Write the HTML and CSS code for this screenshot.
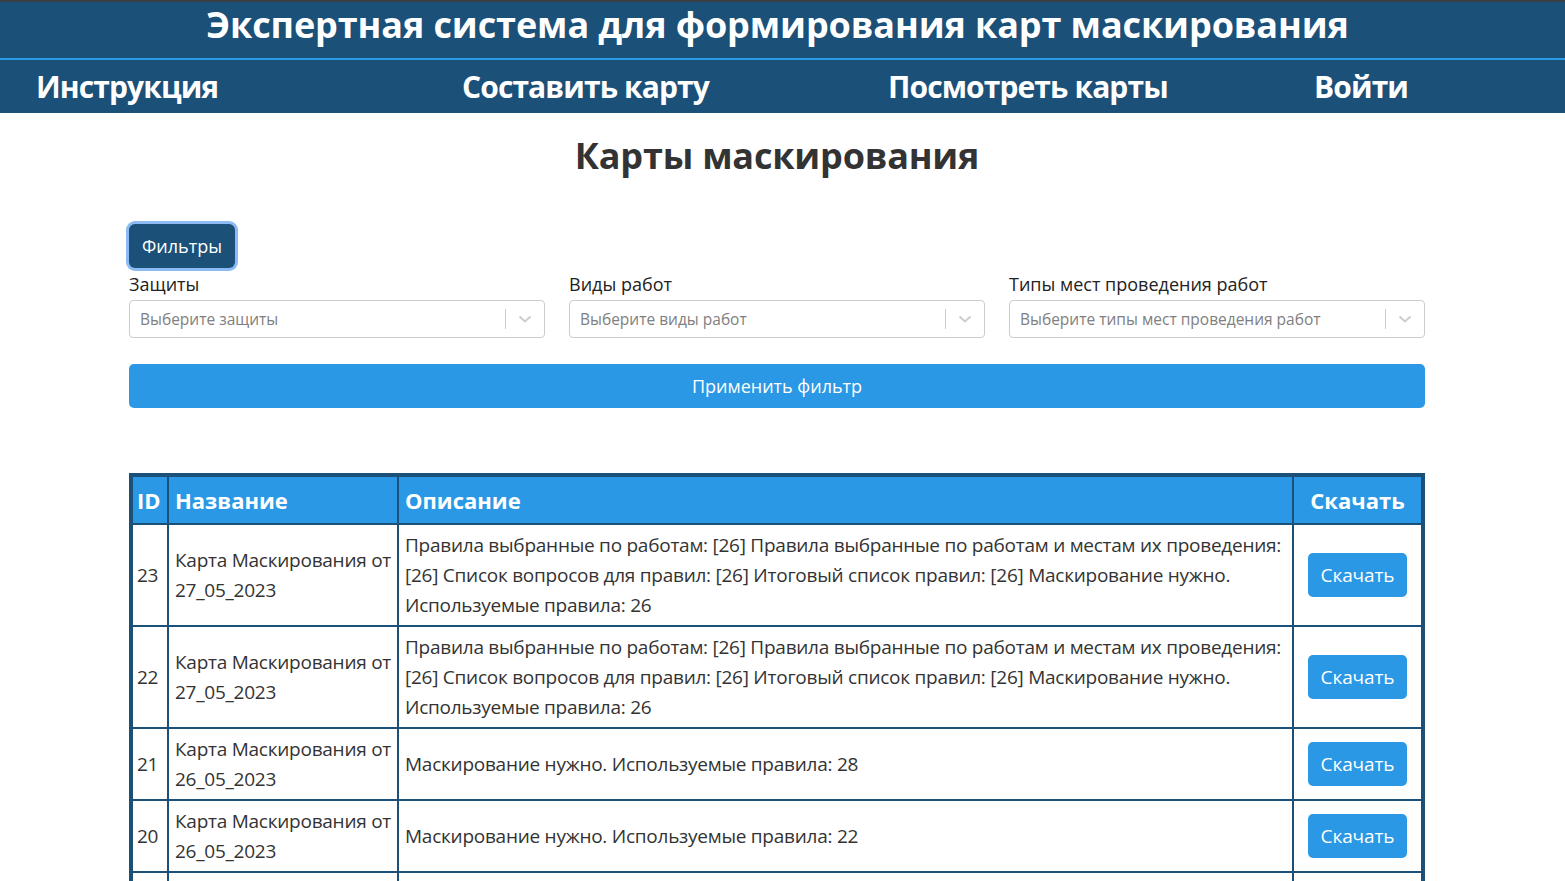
FILE: index.html
```html
<!DOCTYPE html>
<html lang="ru">
<head>
<meta charset="utf-8">
<title>Карты маскирования</title>
<link rel="stylesheet" href="styles.css">
</head>
<body>
<header class="site-header">
  <div class="title-bar">Экспертная система для формирования карт маскирования</div>
  <nav class="nav-bar">
    <a class="nav-link" href="#">Инструкция</a>
    <a class="nav-link" href="#">Составить карту</a>
    <a class="nav-link" href="#">Посмотреть карты</a>
    <a class="nav-link" href="#">Войти</a>
  </nav>
</header>
<main class="page">
  <h1 class="page-title">Карты маскирования</h1>
  <section class="filters">
    <button class="btn-filters" type="button">Фильтры</button>
    <div class="filter-grid">
      <div class="field">
        <label class="field-label">Защиты</label>
        <div class="select">
          <span class="select-placeholder">Выберите защиты</span>
          <span class="select-sep"></span>
          <svg class="select-chevron" viewBox="0 0 20 20" width="20" height="20"><path d="M4.5 7.5 L10 12.5 L15.5 7.5" fill="none" stroke="#ccc" stroke-width="2"/></svg>
        </div>
      </div>
      <div class="field">
        <label class="field-label">Виды работ</label>
        <div class="select">
          <span class="select-placeholder">Выберите виды работ</span>
          <span class="select-sep"></span>
          <svg class="select-chevron" viewBox="0 0 20 20" width="20" height="20"><path d="M4.5 7.5 L10 12.5 L15.5 7.5" fill="none" stroke="#ccc" stroke-width="2"/></svg>
        </div>
      </div>
      <div class="field">
        <label class="field-label">Типы мест проведения работ</label>
        <div class="select">
          <span class="select-placeholder">Выберите типы мест проведения работ</span>
          <span class="select-sep"></span>
          <svg class="select-chevron" viewBox="0 0 20 20" width="20" height="20"><path d="M4.5 7.5 L10 12.5 L15.5 7.5" fill="none" stroke="#ccc" stroke-width="2"/></svg>
        </div>
      </div>
    </div>
    <button class="btn-apply" type="button">Применить фильтр</button>
  </section>
  <table class="maps">
    <thead>
      <tr>
        <th class="col-id">ID</th>
        <th class="col-name">Название</th>
        <th class="col-desc">Описание</th>
        <th class="col-dl">Скачать</th>
      </tr>
    </thead>
    <tbody>
      <tr>
        <td class="col-id">23</td>
        <td class="col-name">Карта Маскирования от 27_05_2023</td>
        <td class="col-desc">Правила выбранные по работам: [26] Правила выбранные по работам и местам их проведения: [26] Список вопросов для правил: [26] Итоговый список правил: [26] Маскирование нужно. Используемые правила: 26</td>
        <td class="col-dl"><button class="btn-dl" type="button">Скачать</button></td>
      </tr>
      <tr>
        <td class="col-id">22</td>
        <td class="col-name">Карта Маскирования от 27_05_2023</td>
        <td class="col-desc">Правила выбранные по работам: [26] Правила выбранные по работам и местам их проведения: [26] Список вопросов для правил: [26] Итоговый список правил: [26] Маскирование нужно. Используемые правила: 26</td>
        <td class="col-dl"><button class="btn-dl" type="button">Скачать</button></td>
      </tr>
      <tr>
        <td class="col-id">21</td>
        <td class="col-name">Карта Маскирования от 26_05_2023</td>
        <td class="col-desc">Маскирование нужно. Используемые правила: 28</td>
        <td class="col-dl"><button class="btn-dl" type="button">Скачать</button></td>
      </tr>
      <tr>
        <td class="col-id">20</td>
        <td class="col-name">Карта Маскирования от 26_05_2023</td>
        <td class="col-desc">Маскирование нужно. Используемые правила: 22</td>
        <td class="col-dl"><button class="btn-dl" type="button">Скачать</button></td>
      </tr>
      <tr>
        <td class="col-id">19</td>
        <td class="col-name">Карта Маскирования от 26_05_2023</td>
        <td class="col-desc">Маскирование нужно. Используемые правила: 22</td>
        <td class="col-dl"><button class="btn-dl" type="button">Скачать</button></td>
      </tr>
    </tbody>
  </table>
</main>
</body>
</html>
```

FILE: styles.css
```css
* { box-sizing: border-box; }
html, body { margin: 0; padding: 0; }
body {
  font-family: "Open Sans", "Noto Sans", sans-serif;
  color: #333;
  background: #fff;
}
.site-header {
  background: #1b5079;
  border-top: 2px solid #3a3f44;
}
.title-bar {
  height: 56px;
  color: #fff;
  font-weight: 700;
  font-size: 36px;
  text-align: center;
  line-height: 46px;
  padding-right: 10px;
  letter-spacing: -0.1px;
}
.nav-bar {
  border-top: 2px solid #2a9ae6;
  height: 55px;
  display: flex;
  align-items: center;
  padding-left: 36px;
}
.nav-link {
  width: 426px;
  color: #fff;
  text-decoration: none;
  font-weight: 700;
  font-size: 30px;
  letter-spacing: -0.9px;
  line-height: 50px;
}
.nav-link:last-child { width: auto; }
.page {
  width: 1296px;
  margin: 0 0 0 129px;
}
.page-title {
  margin: 0;
  padding-top: 20px;
  text-align: center;
  font-size: 36px;
  font-weight: 700;
  color: #333;
  line-height: 46px;
  height: 108px;
  letter-spacing: -0.2px;
}
.filters { display: flex; flex-direction: column; align-items: flex-start; }
.btn-filters {
  height: 44px;
  padding: 0 13px;
  background: #1b5079;
  color: #fff;
  border: none;
  border-radius: 6px;
  font-family: inherit;
  font-size: 18px;
  box-shadow: 0 0 0 3px #8bbaf4;
  margin-top: 3px;
}
.filter-grid {
  margin-top: 5px;
  width: 100%;
  display: grid;
  grid-template-columns: repeat(3, 1fr);
  column-gap: 24px;
}
.field-label {
  display: block;
  font-size: 18px;
  color: #222;
  line-height: 22px;
  margin-bottom: 5px;
}
.select {
  height: 38px;
  border: 1px solid #ccc;
  border-radius: 4px;
  display: flex;
  align-items: center;
  padding-left: 10px;
}
.select-placeholder {
  flex: 1;
  font-size: 15.5px;
  color: #808080;
}
.select-sep {
  width: 1px;
  height: 20px;
  background: #ccc;
}
.select-chevron { margin: 0 9px; }
.btn-apply {
  margin-top: 26px;
  width: 100%;
  height: 44px;
  background: #2a98e5;
  color: #fff;
  border: none;
  border-radius: 5px;
  font-family: inherit;
  font-size: 18px;
}
.maps {
  margin-top: 65px;
  width: 100%;
  border-collapse: collapse;
  border: 4px solid #1b5079;
}
.maps th, .maps td {
  border: 2px solid #1b5079;
  padding: 0 5px;
}
.maps th {
  background: #2a98e5;
  color: #fff;
  font-size: 22px;
  font-weight: 700;
  text-align: left;
  height: 49px;
}
.maps td {
  font-size: 19px;
  line-height: 30px;
  color: #333;
  padding-top: 5px;
  padding-bottom: 5px;
  letter-spacing: -0.25px;
}
.maps .col-id { width: 37px; padding: 0 4px; }
.maps .col-name { width: 230px; padding-left: 6px; padding-right: 3px; }
.maps .col-desc { padding-left: 6px; }
.maps .col-dl { width: 130px; text-align: center; }
.maps th.col-dl { text-align: center; }
.btn-dl {
  height: 44px;
  padding: 0 13px;
  background: #2a98e5;
  color: #fff;
  border: none;
  border-radius: 5px;
  font-family: inherit;
  font-size: 19px;
  letter-spacing: -0.1px;
}
```
